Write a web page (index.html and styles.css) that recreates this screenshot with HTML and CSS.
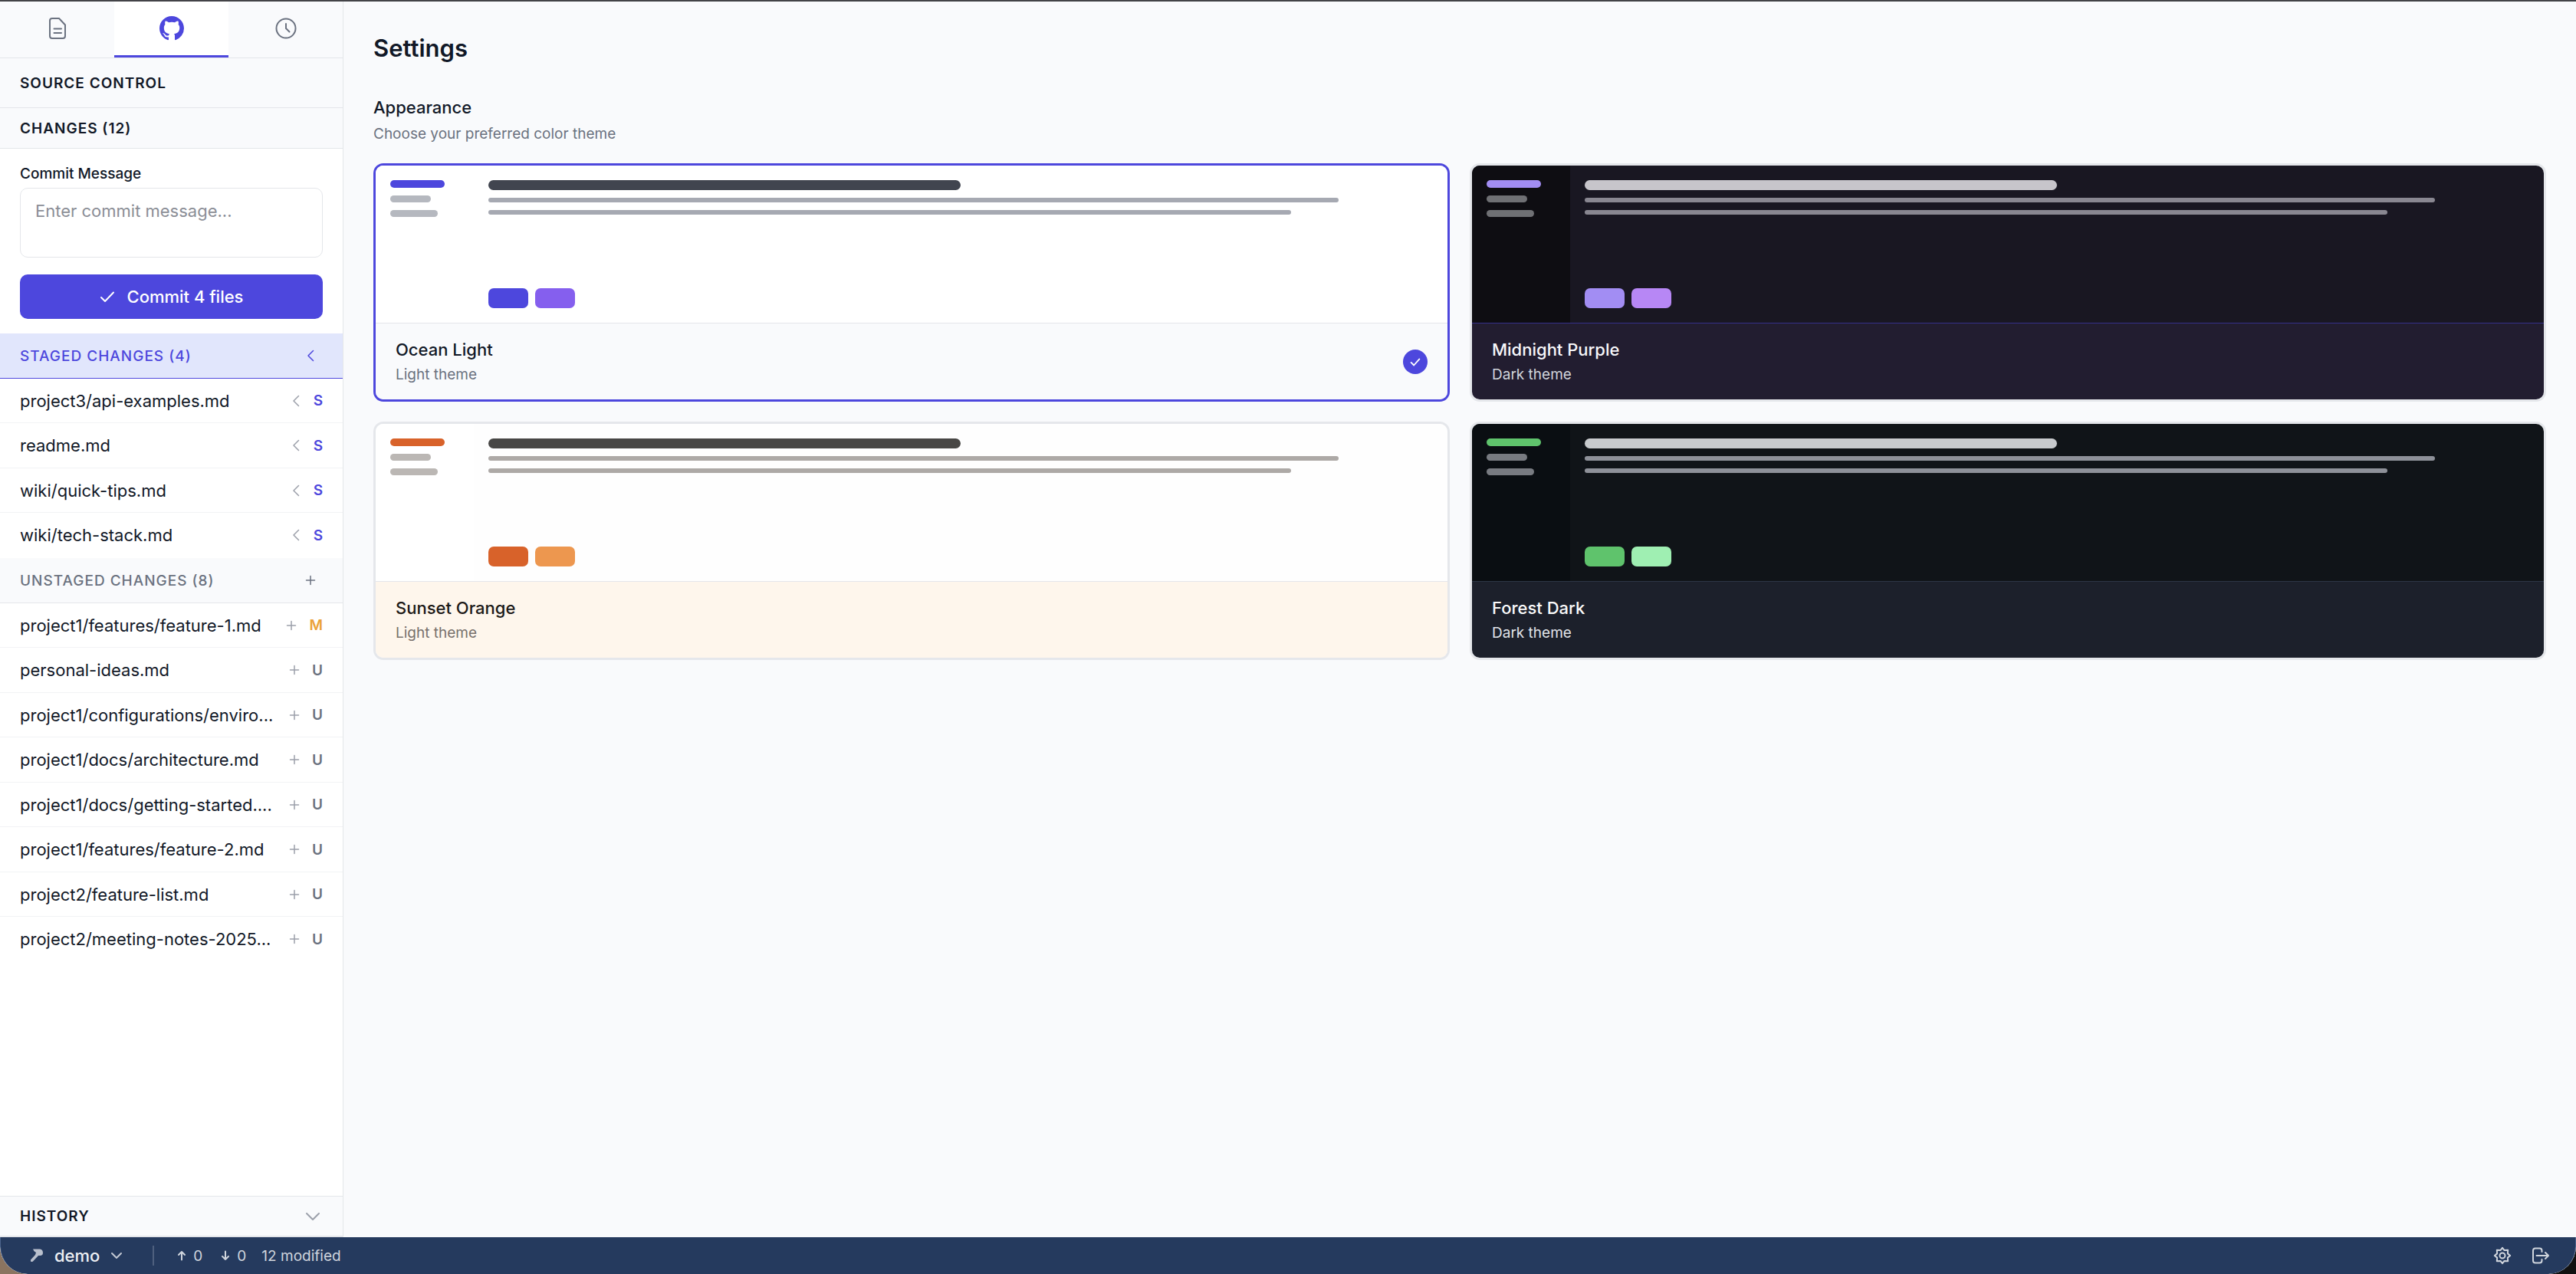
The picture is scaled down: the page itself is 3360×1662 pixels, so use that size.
FILE: index.html
```html
<!DOCTYPE html>
<html lang="en">
<head>
<meta charset="utf-8">
<title>Settings</title>
<link rel="stylesheet" href="styles.css">
</head>
<body>
<svg class="sprite" aria-hidden="true">
  <symbol id="chevron-left" viewBox="0 0 20 20"><path d="M13.500 3.500 7 10l6.500 6.500"/></symbol>
  <symbol id="chevron-down" viewBox="0 0 20 20"><path d="M2 6l8 8 8-8"/></symbol>
  <symbol id="plus" viewBox="0 0 20 20"><path d="M10 4.500v11M4.500 10h11"/></symbol>
  <symbol id="check" viewBox="0 0 20 20"><path d="M2 11l5 5L18 4.500"/></symbol>
</svg>
<div class="app">
  <div class="workspace">
    <aside class="sidebar">
      <nav class="tabs">
        <button class="tab" type="button" aria-label="Files">
          <svg class="icon-lg" viewBox="0 0 32 32"><path d="M9 3h9l8 8.500V26q0 3-3 3H9q-3 0-3-3V6q0-3 3-3zM11.500 16.500h9.500M11.500 22h9.500"/></svg>
        </button>
        <button class="tab tab-active" type="button" aria-label="Source control">
          <svg class="icon-lg icon-solid" viewBox="0 0 16 16"><path d="M8 0C3.580 0 0 3.580 0 8c0 3.540 2.290 6.530 5.470 7.590.4.070.55-.17.55-.38 0-.19-.01-.82-.01-1.490-2.010.37-2.530-.49-2.690-.94-.09-.23-.48-.94-.82-1.130-.28-.15-.68-.52-.01-.53.63-.01 1.080.58 1.230.82.72 1.210 1.870.87 2.330.66.07-.52.28-.87.51-1.070-1.780-.2-3.640-.89-3.640-3.950 0-.87.31-1.590.82-2.150-.08-.2-.36-1.020.08-2.120 0 0 .67-.21 2.200.82.64-.18 1.320-.27 2-.27s1.360.09 2 .27c1.530-1.040 2.200-.82 2.200-.82.44 1.100.16 1.920.08 2.120.51.56.82 1.270.82 2.150 0 3.070-1.870 3.750-3.650 3.950.29.25.54.73.54 1.480 0 1.070-.01 1.930-.01 2.200 0 .21.15.46.55.38A8.010 8.010 0 0 0 16 8c0-4.420-3.580-8-8-8z"/></svg>
        </button>
        <button class="tab" type="button" aria-label="History">
          <svg class="icon-lg" viewBox="0 0 32 32"><circle cx="16" cy="16" r="12.500"/><path d="M16 10v6l4.500 4.500"/></svg>
        </button>
      </nav>
      <h2 class="bar bar-title">Source Control</h2>
      <h3 class="bar">Changes (12)</h3>
      <form class="commit">
        <label class="commit-label" for="message">Commit Message</label>
        <textarea class="commit-input" id="message" placeholder="Enter commit message..."></textarea>
        <button class="commit-button" type="button"><svg class="icon-sm" aria-hidden="true"><use href="#check"/></svg>Commit 4 files</button>
      </form>
      <div class="group group-staged">
        <h4 class="group-title">Staged Changes (4)</h4>
        <button class="group-action" type="button" aria-label="Unstage all"><svg class="icon-sm"><use href="#chevron-left"/></svg></button>
      </div>
      <ul class="files">
        <li class="file"><span class="file-name">project3/api-examples.md</span><button class="file-action" type="button" aria-label="Unstage"><svg class="icon-sm"><use href="#chevron-left"/></svg></button><span class="status status-s">S</span></li>
        <li class="file"><span class="file-name">readme.md</span><button class="file-action" type="button" aria-label="Unstage"><svg class="icon-sm"><use href="#chevron-left"/></svg></button><span class="status status-s">S</span></li>
        <li class="file"><span class="file-name">wiki/quick-tips.md</span><button class="file-action" type="button" aria-label="Unstage"><svg class="icon-sm"><use href="#chevron-left"/></svg></button><span class="status status-s">S</span></li>
        <li class="file"><span class="file-name">wiki/tech-stack.md</span><button class="file-action" type="button" aria-label="Unstage"><svg class="icon-sm"><use href="#chevron-left"/></svg></button><span class="status status-s">S</span></li>
      </ul>
      <div class="group">
        <h4 class="group-title">Unstaged Changes (8)</h4>
        <button class="group-action" type="button" aria-label="Stage all"><svg class="icon-sm"><use href="#plus"/></svg></button>
      </div>
      <ul class="files">
        <li class="file"><span class="file-name">project1/features/feature-1.md</span><button class="file-action" type="button" aria-label="Stage"><svg class="icon-sm"><use href="#plus"/></svg></button><span class="status status-m">M</span></li>
        <li class="file"><span class="file-name">personal-ideas.md</span><button class="file-action" type="button" aria-label="Stage"><svg class="icon-sm"><use href="#plus"/></svg></button><span class="status">U</span></li>
        <li class="file"><span class="file-name">project1/configurations/enviro...</span><button class="file-action" type="button" aria-label="Stage"><svg class="icon-sm"><use href="#plus"/></svg></button><span class="status">U</span></li>
        <li class="file"><span class="file-name">project1/docs/architecture.md</span><button class="file-action" type="button" aria-label="Stage"><svg class="icon-sm"><use href="#plus"/></svg></button><span class="status">U</span></li>
        <li class="file"><span class="file-name">project1/docs/getting-started....</span><button class="file-action" type="button" aria-label="Stage"><svg class="icon-sm"><use href="#plus"/></svg></button><span class="status">U</span></li>
        <li class="file"><span class="file-name">project1/features/feature-2.md</span><button class="file-action" type="button" aria-label="Stage"><svg class="icon-sm"><use href="#plus"/></svg></button><span class="status">U</span></li>
        <li class="file"><span class="file-name">project2/feature-list.md</span><button class="file-action" type="button" aria-label="Stage"><svg class="icon-sm"><use href="#plus"/></svg></button><span class="status">U</span></li>
        <li class="file"><span class="file-name">project2/meeting-notes-2025...</span><button class="file-action" type="button" aria-label="Stage"><svg class="icon-sm"><use href="#plus"/></svg></button><span class="status">U</span></li>
      </ul>
      <button class="bar history" type="button">History<svg class="icon-sm history-chevron" aria-hidden="true"><use href="#chevron-down"/></svg></button>
    </aside>
    <main class="main">
      <h1 class="page-title">Settings</h1>
      <h2 class="section-title">Appearance</h2>
      <p class="section-note">Choose your preferred color theme</p>
      <div class="themes">
        <button class="theme theme-ocean theme-selected" type="button">
          <span class="preview"><span class="preview-side"><i></i><i></i><i></i></span><span class="preview-main"><i class="heading"></i><i class="line"></i><i class="line line-short"></i><span class="swatches"><i></i><i></i></span></span></span>
          <span class="theme-info"><span class="theme-text"><span class="theme-name">Ocean Light</span><span class="theme-kind">Light theme</span></span><span class="tick"><svg viewBox="0 0 20 20"><path d="M4 11l4 4 8-9"/></svg></span></span>
        </button>
        <button class="theme theme-midnight" type="button">
          <span class="preview"><span class="preview-side"><i></i><i></i><i></i></span><span class="preview-main"><i class="heading"></i><i class="line"></i><i class="line line-short"></i><span class="swatches"><i></i><i></i></span></span></span>
          <span class="theme-info"><span class="theme-text"><span class="theme-name">Midnight Purple</span><span class="theme-kind">Dark theme</span></span></span>
        </button>
        <button class="theme theme-sunset" type="button">
          <span class="preview"><span class="preview-side"><i></i><i></i><i></i></span><span class="preview-main"><i class="heading"></i><i class="line"></i><i class="line line-short"></i><span class="swatches"><i></i><i></i></span></span></span>
          <span class="theme-info"><span class="theme-text"><span class="theme-name">Sunset Orange</span><span class="theme-kind">Light theme</span></span></span>
        </button>
        <button class="theme theme-forest" type="button">
          <span class="preview"><span class="preview-side"><i></i><i></i><i></i></span><span class="preview-main"><i class="heading"></i><i class="line"></i><i class="line line-short"></i><span class="swatches"><i></i><i></i></span></span></span>
          <span class="theme-info"><span class="theme-text"><span class="theme-name">Forest Dark</span><span class="theme-kind">Dark theme</span></span></span>
        </button>
      </div>
    </main>
  </div>
  <footer class="statusbar">
    <button class="workspace-picker" type="button">
      <svg class="hammer" viewBox="0 0 18 20"><path d="M4 1.500h9q4 .5 4 5 0 3-3 3.500h-3L4 17.500q-1.500 1-3 0v-2L7 9l1-3Q5 5 4 1.500z"/></svg>
      demo
      <svg class="picker-chevron" viewBox="0 0 16 10"><path d="M2 2l6 6 6-6"/></svg>
    </button>
    <span class="divider"></span>
    <span class="sync"><svg class="arrow" viewBox="0 0 12 14"><path d="M6 12.500V2M2 6l4-4 4 4"/></svg>0</span>
    <span class="sync"><svg class="arrow" viewBox="0 0 12 14"><path d="M6 1.500V12M2 8l4 4 4-4"/></svg>0</span>
    <span class="modified">12 modified</span>
    <button class="tool" type="button" aria-label="Settings"><svg viewBox="0 0 24 24"><circle cx="12" cy="12" r="3.500"/><path d="M12 1.800l2.600 3.300 4.600-.3-.3 4.600 3.300 2.600-3.300 2.600.3 4.600-4.600-.3-2.600 3.300-2.600-3.300-4.600.3.300-4.600L1.800 12l3.300-2.600-.3-4.600 4.600.3z"/></svg></button>
    <button class="tool" type="button" aria-label="Log out"><svg viewBox="0 0 24 24"><path d="M13.500 7V5.500q0-3-3-3H5q-3 0-3 3v13q0 3 3 3h5.500q3 0 3-3V17M6.500 12H22M18 8l4 4-4 4"/></svg></button>
  </footer>
</div>
</body>
</html>
```
FILE: styles.css
```css
:root {
  --ink: #111827;
  --muted: #6b7280;
  --faint: #9ca0aa;
  --line: #e4e6ea;
  --surface: #f9fafc;
  --accent: #4d47dd;
}

* { box-sizing: border-box; }

body {
  margin: 0;
  background: linear-gradient(to right, #8a7460 50%, #111 50%);
  color: var(--ink);
  font-family: Inter, "Liberation Sans", sans-serif;
  font-size: 22px;
}

h1, h2, h3, h4, p, ul { margin: 0; padding: 0; font-weight: inherit; font-size: inherit; }
ul { list-style: none; }
button { margin: 0; padding: 0; border: 0; background: none; color: inherit; font: inherit; cursor: pointer; }
svg { display: block; fill: none; stroke: currentColor; stroke-width: 2; stroke-linecap: round; stroke-linejoin: round; }

.sprite { display: none; }
.icon-lg { width: 32px; height: 32px; }
.icon-solid { fill: currentColor; stroke: none; }
.icon-sm { width: 20px; height: 20px; stroke-width: 1.5; }

.app {
  display: flex;
  flex-direction: column;
  min-height: 100vh;
  border-top: 2px solid #434347;
  border-radius: 0 0 36px 36px;
  background: var(--surface);
  overflow: hidden;
}
.workspace { display: flex; flex: 1; }

/* Sidebar */
.sidebar {
  display: flex;
  flex-direction: column;
  width: 448px;
  flex: none;
  border-right: 1px solid var(--line);
  border-bottom: 2px solid var(--line);
  background: #fff;
}
.tabs { display: flex; height: 74px; border-bottom: 1px solid var(--line); background: var(--surface); }
.tab {
  display: flex;
  flex: 1;
  align-items: center;
  justify-content: center;
  border-bottom: 3px solid transparent;
  color: var(--muted);
}
.tab-active { border-color: var(--accent); background: #fff; color: var(--accent); }

.bar {
  display: flex;
  align-items: center;
  justify-content: space-between;
  height: 53px;
  padding: 0 26px;
  border-bottom: 1px solid var(--line);
  background: var(--surface);
  font-size: 19px;
  font-weight: 600;
  letter-spacing: 1px;
  text-transform: uppercase;
}
.bar-title { height: 65px; }
.history { margin-top: auto; height: 52px; border-top: 1px solid var(--line); border-bottom: 0; }
.history-chevron { margin-right: 3px; color: var(--faint); stroke-width: 2; }

.commit { display: flex; flex-direction: column; padding: 20px 26px 19px; }
.commit-label { font-size: 19px; font-weight: 500; line-height: 26px; margin-bottom: 5px; }
.commit-input {
  height: 91px;
  margin-bottom: 22px;
  padding: 15px 19px;
  border: 1px solid var(--line);
  border-radius: 10px;
  background: #fff;
  color: var(--ink);
  font: inherit;
  line-height: 28px;
  resize: none;
}
.commit-input::placeholder { color: #8b8e96; }
.commit-button {
  display: flex;
  align-items: center;
  justify-content: center;
  gap: 16px;
  height: 58px;
  border-radius: 10px;
  background: var(--accent);
  color: #fff;
  font-weight: 500;
}
.commit-button .icon-sm { stroke-width: 2; }

.group {
  display: flex;
  align-items: center;
  justify-content: space-between;
  height: 59px;
  padding: 0 26px;
  border-bottom: 1px solid var(--line);
  background: var(--surface);
  color: var(--muted);
}
.group-staged { border-color: var(--accent); background: #e1e6fc; color: var(--accent); }
.group-title { font-size: 19px; font-weight: 500; letter-spacing: 1px; text-transform: uppercase; }
.group-action { display: grid; place-items: center; width: 32px; height: 32px; }

.file {
  display: flex;
  align-items: center;
  height: 58px;
  padding: 0 26px;
  border-bottom: 1px solid #f2f3f5;
}
.file:nth-child(even) { height: 59px; }
.file:last-child { border-color: transparent; }
.file-name { flex: 1; min-width: 0; line-height: 32px; white-space: nowrap; }
.file-action { margin-right: 13px; color: var(--faint); }
.status { color: var(--muted); font-size: 19px; font-weight: 600; }
.status-s { color: var(--accent); }
.status-m { color: #eba23b; }

/* Settings page */
.main { flex: 1; min-width: 0; padding: 40px 39px; }
.page-title { margin-bottom: 40px; font-size: 31px; font-weight: 600; line-height: 42px; }
.section-title { font-weight: 500; line-height: 32px; }
.section-note { margin: 5px 0 24px; color: var(--muted); font-size: 19px; line-height: 28px; }
.themes { display: grid; grid-template-columns: 1fr 1fr; gap: 26px; }
.theme {
  display: flex;
  flex-direction: column;
  border: 3px solid #e5e7eb;
  border-radius: 13px;
  overflow: hidden;
  text-align: left;
}
.theme-selected { border-color: var(--accent); }
.preview { display: flex; width: 100%; height: 205px; background: var(--canvas); }
.preview-side {
  display: flex;
  flex-direction: column;
  gap: 10px;
  width: 128px;
  padding: 19px 20px 19px 19px;
  background: var(--side);
}
.preview-side i { width: 60%; height: 9px; border-radius: 5px; background: var(--side-bar); }
.preview-side i:first-child { width: 80%; height: 10px; background: var(--primary); }
.preview-side i:last-child { width: 70%; }
.preview-main { display: flex; flex: 1; flex-direction: column; gap: 10px; padding: 19px; }
.heading { width: 50%; height: 13px; border-radius: 7px; background: var(--heading); }
.line { width: 90%; height: 6px; border-radius: 3px; background: var(--text-bar); }
.line-short { width: 85%; }
.swatches { display: flex; gap: 9px; margin-top: auto; }
.swatches i { width: 52px; height: 26px; border-radius: 7px; background: var(--primary); }
.swatches i:last-child { background: var(--secondary); }

.theme-info {
  display: flex;
  align-items: center;
  justify-content: space-between;
  width: 100%;
  height: 100px;
  padding: 0 26px;
  border-top: 1px solid var(--rule);
  background: var(--panel);
}
.theme-text { display: flex; flex-direction: column; gap: 3px; }
.theme-name { color: var(--name); font-weight: 500; line-height: 32px; }
.theme-kind { color: var(--kind); font-size: 19px; line-height: 28px; }
.tick { display: grid; place-items: center; width: 32px; height: 32px; border-radius: 50%; background: var(--accent); color: #fff; }
.tick svg { width: 18px; height: 18px; stroke-width: 2; }

.theme-ocean { --canvas: #fff; --side: #fff; --primary: #4d47dd; --secondary: #855fee; --side-bar: #b5b8bf; --heading: #41454f; --text-bar: #a6a9b2; --rule: #e4e6ea; --panel: #f9fafc; --name: #111827; --kind: #6b7280; }
.theme-midnight { --canvas: #191722; --side: #0e0d12; --primary: #a28df3; --secondary: #b787f5; --side-bar: #6f7074; --heading: #c7c5cb; --text-bar: #898791; --rule: #35308a; --panel: #221d30; --name: #f7f7fa; --kind: #d1d5db; }
.theme-sunset { --canvas: #fefefe; --side: #fff; --primary: #d8622a; --secondary: #ed974f; --side-bar: #bbb7b4; --heading: #484745; --text-bar: #ada9a6; --rule: #e4e6ea; --panel: #fef6ec; --name: #1c1917; --kind: #78716c; }
.theme-forest { --canvas: #101418; --side: #0a0e12; --primary: #5fc36c; --secondary: #9fefb2; --side-bar: #787b81; --heading: #c7cacd; --text-bar: #8e9199; --rule: #2d3646; --panel: #1c202b; --name: #fafafa; --kind: #e1e4e9; }

/* Status bar */
.statusbar {
  display: flex;
  align-items: center;
  height: 48px;
  padding: 0 32px 0 38px;
  border: solid #4a628a;
  border-width: 0 1px;
  border-radius: 0 0 36px 36px;
  background: #253a5e;
  color: #d0d5dd;
  font-size: 19px;
}
.workspace-picker { display: flex; align-items: center; gap: 14px; color: #eef0f4; font-size: 22px; font-weight: 500; }
.hammer { width: 18px; height: 20px; fill: #b9c0cd; stroke: none; }
.picker-chevron { width: 16px; height: 10px; color: #c3c9d4; }
.divider { width: 2px; height: 26px; margin: 0 30px 0 39px; background: #4f5f7e; }
.sync { display: flex; align-items: center; gap: 9px; margin-right: 24px; }
.arrow { width: 12px; height: 14px; }
.modified { margin: 0 auto 0 -4px; }
.tool { display: grid; place-items: center; width: 26px; height: 26px; margin-left: 24px; }
.tool svg { width: 24px; height: 24px; }
```
